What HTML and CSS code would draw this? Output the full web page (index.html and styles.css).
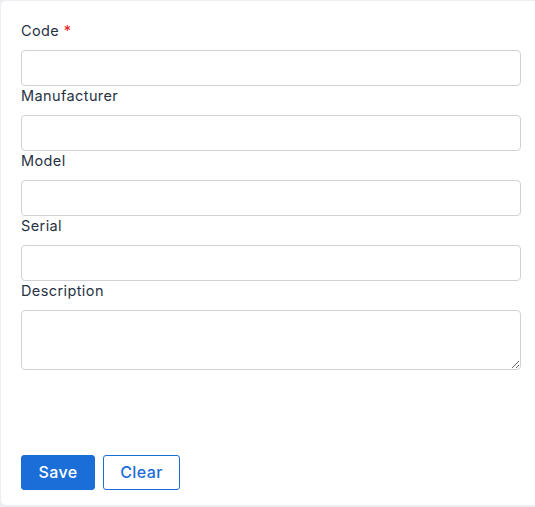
FILE: index.html
```html
<!DOCTYPE html>
<html>
<head>
<meta charset="utf-8">
<link rel="stylesheet" href="styles.css">
</head>
<body>
<div class="card">
  <form class="form">
    <div class="field">
      <label class="label">Code <span class="req">*</span></label>
      <input class="input" type="text">
    </div>
    <div class="field">
      <label class="label">Manufacturer</label>
      <input class="input" type="text">
    </div>
    <div class="field">
      <label class="label">Model</label>
      <input class="input" type="text">
    </div>
    <div class="field">
      <label class="label">Serial</label>
      <input class="input" type="text">
    </div>
    <div class="field">
      <label class="label">Description</label>
      <textarea class="textarea"></textarea>
    </div>
    <div class="actions">
      <button type="button" class="btn btn-primary">Save</button>
      <button type="button" class="btn btn-outline">Clear</button>
    </div>
  </form>
</div>
</body>
</html>
```
FILE: styles.css
```css
html, body {
  margin: 0;
  padding: 0;
  background: #eceef2;
  overflow: hidden;
  font-family: "Inter", "Open Sans", "Liberation Sans", sans-serif;
}
.card {
  box-sizing: border-box;
  margin: 1px 0 0 1px;
  width: 560px;
  height: 504px;
  background: #ffffff;
  border-radius: 5px;
  padding: 20px 20px 15px 20px;
}
.form {
  display: flex;
  flex-direction: column;
  height: 100%;
}
.field {
  display: flex;
  flex-direction: column;
  gap: 8px;
}
.label {
  display: block;
  font-size: 14.5px;
  line-height: 20px;
  padding-bottom: 1px;
  font-weight: 400;
  letter-spacing: 0.4px;
  color: #273244;
}
.req {
  color: #e02020;
}
.input, .textarea {
  box-sizing: border-box;
  width: 500px;
  border: 1px solid #cfd3d8;
  border-radius: 4px;
  background: #fff;
  font-family: inherit;
  font-size: 14px;
  margin: 0;
}
.input {
  height: 36px;
}
.textarea {
  height: 60px;
  resize: vertical;
  display: block;
}
.actions {
  margin-top: auto;
  display: flex;
  gap: 8px;
}
.btn {
  box-sizing: border-box;
  height: 35px;
  border-radius: 3px;
  font-family: inherit;
  font-size: 16px;
  font-weight: 500;
  letter-spacing: 0.4px;
  padding: 0 8px 2px;
  cursor: pointer;
}
.btn-primary {
  width: 74px;
  background: #1b6ed8;
  color: #fff;
  border: 1px solid #1b6ed8;
}
.btn-outline {
  width: 77px;
  background: #fff;
  color: #1b6ed8;
  border: 1px solid #1b6ed8;
}
```
